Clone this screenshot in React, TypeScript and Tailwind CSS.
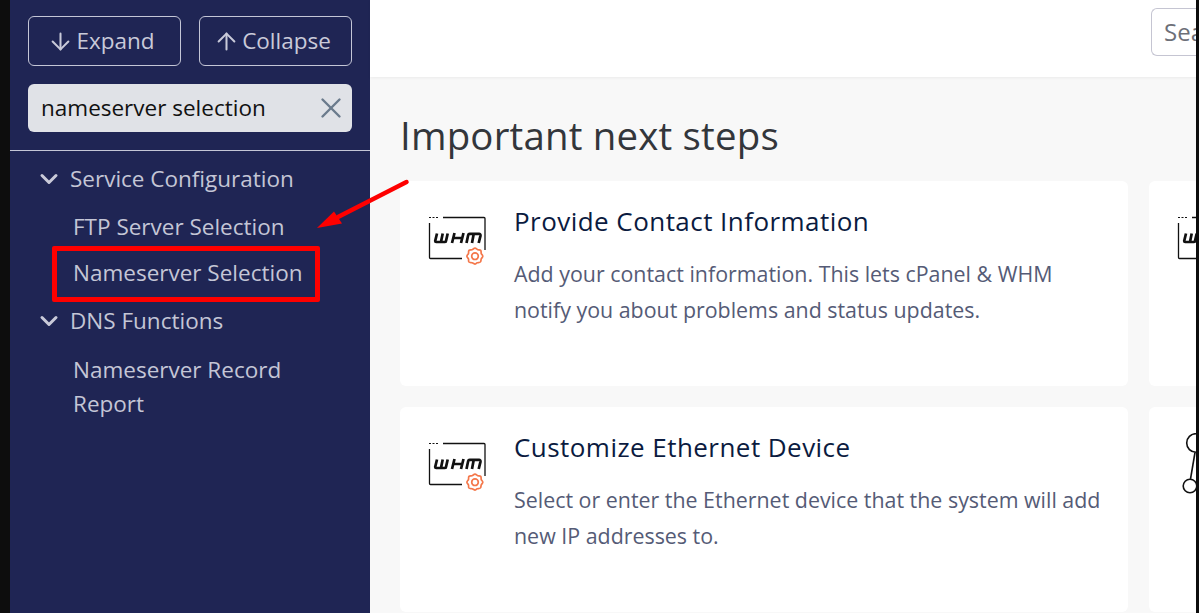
import React from "react";
import { ArrowDown, ArrowUp, ChevronDown, X } from "lucide-react";

function WhmIcon() {
  return (
    <svg width="62" height="62" viewBox="0 0 62 62" fill="none" className="shrink-0">
      <path d="M1 12.5h2M4.5 12.5h2M8 12.5h2" stroke="#111" strokeWidth="1" />
      <path d="M15 12.5H56a1 1 0 0 1 1 1V45" stroke="#111" strokeWidth="1.3" />
      <path d="M1.5 18V52.5a1 1 0 0 0 1 1H34" stroke="#111" strokeWidth="1.3" />
      <path d="M9 28.5L7.2 36a1 1 0 0 0 1 1h4a1 1 0 0 0 1-1L14.7 28.5M13 37h4a1 1 0 0 0 1-1L19.7 28.5" stroke="#111" strokeWidth="2.7" />
      <path d="M26.5 28L24 38M35.5 28L33 38M25.5 33H34" stroke="#111" strokeWidth="2.7" />
      <path d="M38.5 38L40.2 30a1.5 1.5 0 0 1 1.5-1.2H51a1.5 1.5 0 0 1 1.5 1.8L50.7 38M45.7 29L44 38" stroke="#111" strokeWidth="2.7" />
      <g stroke="#f4774a" strokeWidth="1.7" strokeLinejoin="round">
        <path d="M47 43.2c1.3 0 1.6 1.2 2.7 1.5 1.1.3 2.2-.3 3 .7.8 1 .2 2 .5 3 .3 1 1.6 1.6 1.6 2.8s-1.3 1.8-1.6 2.8c-.3 1-.1 2.1-.9 3-.8.8-1.9.4-3 .7-1 .3-1.7 1.5-2.3 1.5s-1.9-1.2-3-1.5c-1.1-.3-2.2.1-3-.7-.8-.9-.2-2-.5-3-.3-1-1.6-1.6-1.6-2.8s1.3-1.8 1.6-2.8c.3-1 -.3-2 .5-3 .8-1 1.9-.4 3-.7 1.1-.3 1.7-1.5 3-1.5z" />
        <circle cx="47" cy="51.2" r="3.3" />
      </g>
    </svg>
  );
}

function Card({ title, children, icon }: { title: string; children: React.ReactNode; icon: React.ReactNode }) {
  return (
    <div className="flex h-[205px] w-[728px] shrink-0 gap-[25px] rounded-[6px] bg-white pl-[28px] pr-[24px] pt-[23px]">
      <div className="mt-[1px] w-[61px] shrink-0">{icon}</div>
      <div className="min-w-0 flex-1">
        <h3 className="mb-[18px] text-[26px] leading-[34px] tracking-[0.45px] text-[#0b1b3f]">{title}</h3>
        <p className="text-[21.4px] leading-[36px] text-[#555b76]">{children}</p>
      </div>
    </div>
  );
}

function PartialCard({ icon }: { icon: React.ReactNode }) {
  return (
    <div className="h-[205px] w-[200px] shrink-0 rounded-[6px] bg-white pl-[28px] pt-[24px]">{icon}</div>
  );
}

function Group({ label }: { label: string }) {
  return (
    <div className="flex h-[46px] items-center pl-[25px]">
      <ChevronDown size={28} strokeWidth={2.6} className="text-[#c9cad9]" />
      <span className="ml-[7px] text-[22.5px] text-[#c4c6d6]">{label}</span>
    </div>
  );
}

export default function App() {
  return (
    <div className="relative flex h-[613px] w-[1199px] overflow-hidden bg-[#0d0d0d] font-['Open_Sans',sans-serif]">
      <aside className="ml-[10px] flex w-[360px] shrink-0 flex-col bg-[#1f2554] pt-[16px]">
        <div className="flex gap-[18px] px-[18px]">
          <button className="flex h-[50px] w-[153px] items-center justify-center gap-[7px] rounded-[6px] border border-[#c4c6d6] pr-[2px] text-[22.5px] text-[#c9cad9]">
            <ArrowDown size={27} strokeWidth={1.8} className="-mx-[5px]" />
            Expand
          </button>
          <button className="flex h-[50px] w-[153px] items-center justify-center gap-[7px] rounded-[6px] border border-[#c4c6d6] pr-[2px] text-[22.5px] text-[#c9cad9]">
            <ArrowUp size={27} strokeWidth={1.8} className="-mx-[5px]" />
            Collapse
          </button>
        </div>
        <div className="mx-[18px] mt-[18px] flex h-[48px] items-center justify-between rounded-[6px] bg-[#e0e2e7] pl-[13px] pr-[4px]">
          <span className="text-[22.5px] text-[#111]">nameserver selection</span>
          <X size={34} strokeWidth={1.7} className="text-[#6b7b8c]" />
        </div>
        <div className="mt-[18px] border-t border-[#c4c6d6]" />
        <nav className="pt-[5px]">
          <Group label="Service Configuration" />
          <div className="mt-[2px] flex h-[46px] items-center pl-[63px] text-[22.5px] text-[#c4c6d6]">FTP Server Selection</div>
          <div className="flex h-[46px] items-center pl-[63px] text-[22.5px] text-[#c4c6d6]">Nameserver Selection</div>
          <div className="mt-[2px]"><Group label="DNS Functions" /></div>
          <div className="pl-[63px] pr-[40px] pt-[9px] text-[22.5px] leading-[34px] text-[#c4c6d6]">Nameserver Record Report</div>
        </nav>
      </aside>

      <main className="flex min-w-0 flex-1 flex-col bg-[#f8f8f8]">
        <header className="flex h-[77px] shrink-0 items-start bg-white pl-[781px] pt-[8px] shadow-[0_1px_3px_rgba(0,0,0,0.06)]">
          <div className="flex h-[48px] w-[45px] shrink-0 items-center overflow-hidden rounded-l-[6px] border-y border-l border-[#c5c5d2] pl-[12px] text-[24px] text-[#6d6f78]">
            Search
          </div>
        </header>
        <div className="flex flex-col pl-[30px] pt-[33px]">
          <h1 className="text-[38.4px] leading-[50px] tracking-[0.2px] text-[#33363b]">Important next steps</h1>
          <div className="mt-[21px] flex gap-[21px]">
            <Card title="Provide Contact Information" icon={<WhmIcon />}>
              Add your contact information. This lets cPanel &amp; WHM notify you about problems and status updates.
            </Card>
            <PartialCard icon={<WhmIcon />} />
          </div>
          <div className="mt-[21px] flex gap-[21px]">
            <Card title="Customize Ethernet Device" icon={<WhmIcon />}>
              Select or enter the Ethernet device that the system will add new IP addresses to.
            </Card>
            <PartialCard
              icon={
                <svg width="40" height="70" viewBox="0 0 40 70" fill="none" stroke="#111" strokeWidth="1.6" className="-ml-[6px] mt-[2px]">
                  <circle cx="25" cy="10" r="9.3" />
                  <circle cx="19" cy="53" r="6.8" />
                  <path d="M24 19.5L19.5 46" />
                </svg>
              }
            />
          </div>
        </div>
      </main>

      <div className="absolute right-0 top-0 h-full w-[3px] bg-[#0d0d0d]" />

      <div className="absolute left-[52px] top-[246px] h-[56px] w-[268px] rounded-[2px] border-[5px] border-[#fe0000]" />
      <svg className="absolute left-[310px] top-[175px]" width="105" height="60" viewBox="0 0 105 60" fill="none">
        <path d="M96.5 7L28 42" stroke="#fe0000" strokeWidth="4.5" strokeLinecap="round" />
        <path d="M7 53L24 36.5L32 48.5Z" fill="#fe0000" />
      </svg>
    </div>
  );
}
